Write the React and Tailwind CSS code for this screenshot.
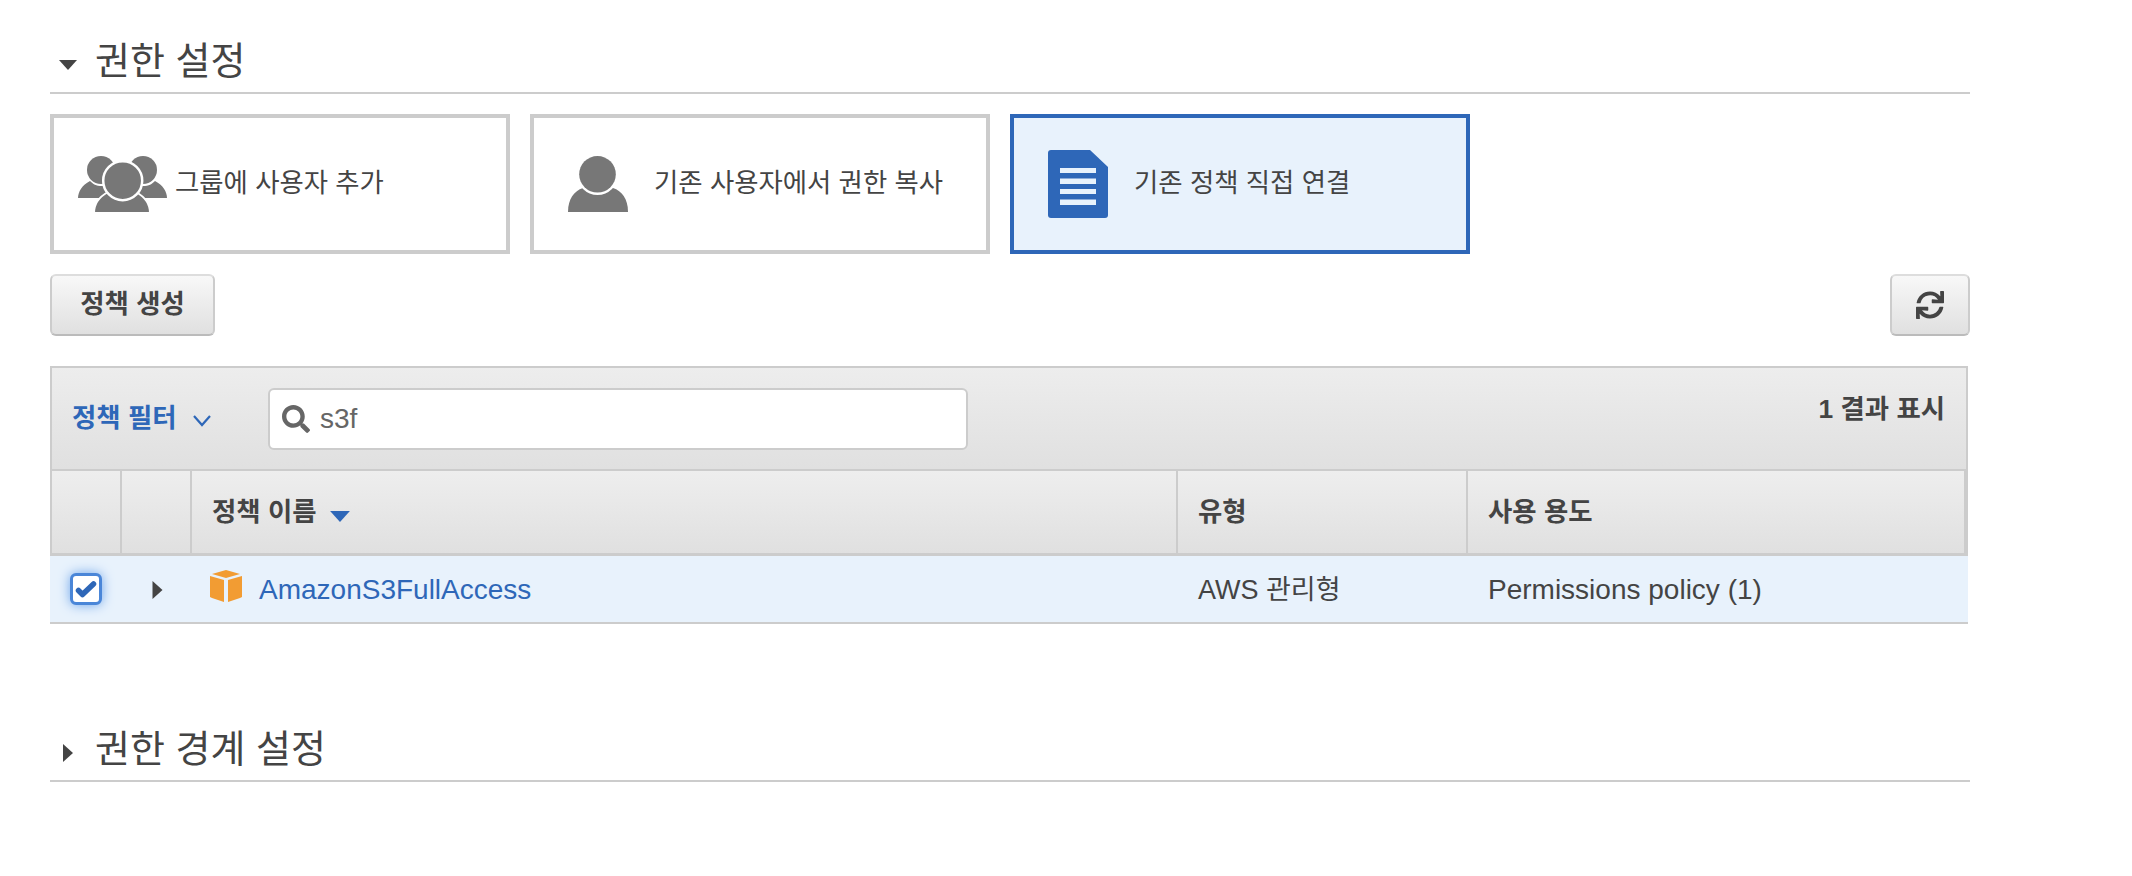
import React from 'react'
import { FaSearch, FaSync } from 'react-icons/fa'

const KR = { fontFamily: '"Liberation Sans", "Noto Sans CJK KR", sans-serif' }

const CaretDown = ({ className }) => (
  <svg viewBox="0 0 18 10" className={className}><path d="M0 0h18L9 10z" fill="currentColor" /></svg>
)
const CaretRight = ({ className }) => (
  <svg viewBox="0 0 10 18" className={className}><path d="M0 0v18l10-9z" fill="currentColor" /></svg>
)

const GroupIcon = () => (
  <svg viewBox="0 0 89 57" className="w-[89px] h-[57px] shrink-0" fill="#777">
    <circle cx="23" cy="14" r="14" />
    <circle cx="65" cy="14" r="14" />
    <path d="M0 42c0-6 4-13 12-17 3 3 6 5 12 5h10v12z" />
    <path d="M89 42c0-6-4-13-12-17-3 3-6 5-12 5H55v12z" />
    <path d="M16 57c0-10 5-16 14-21h28c9 5 14 11 14 21z" stroke="#fff" strokeWidth="2" />
    <circle cx="44.7" cy="24.7" r="19.500" stroke="#fff" strokeWidth="2.500" />
  </svg>
)

const UserIcon = () => (
  <svg viewBox="0 0 60 56" className="w-[60px] h-[56px] shrink-0" fill="#777">
    <path d="M0 56c0-13 6-21 15-24h30c9 3 15 11 15 24z" />
    <circle cx="29.500" cy="18.500" r="20.500" fill="#fff" />
    <circle cx="29.500" cy="18.300" r="18.300" />
  </svg>
)

const DocIcon = () => (
  <svg viewBox="0 0 60 68" className="w-[60px] h-[68px] shrink-0">
    <path d="M3 0h39l18 17v48a3 3 0 0 1-3 3H3a3 3 0 0 1-3-3V3a3 3 0 0 1 3-3z" fill="#2e67b8" />
    <path d="M12 18h36v5H12zM12 28.500h36v5.500H12zM12 39h36v5H12zM12 49.500h36v5.500H12z" fill="#e8f2fc" />
  </svg>
)

const CubeIcon = () => (
  <svg viewBox="0 0 32 32" className="w-[32px] h-[32px]" fill="#f29c33">
    <path d="M16 0l14 4-14 4L2 4z" />
    <path d="M0 6l14 4v22L2 28l-2-1z" />
    <path d="M32 6l-14 4v22l12-4 2-1z" />
  </svg>
)

const Card = ({ icon, label, active, pad }) => (
  <div className={`w-[460px] h-[140px] border-4 flex items-center ${pad} ${active ? 'border-[#2e67b8] bg-[#e8f2fc]' : 'border-[#ccc] bg-white'}`}>
    {icon}
    <span className="text-[26.4px] text-[#444]">{label}</span>
  </div>
)

const Section = ({ caret, title }) => (
  <div className="flex items-center h-[60px] border-b-2 border-[#ccc] pb-1">
    {caret}
    <h2 className="text-[38px] leading-[50px] text-[#444]">{title}</h2>
  </div>
)

const th = 'flex items-center pt-[2px] bg-gradient-to-b from-[#eee] to-[#e0e0e0] border-r-2 border-[#ccc] pl-[20px] text-[26.4px] font-bold text-[#444]'
const btn = 'h-[62px] rounded-[6px] border-2 border-t-[#ddd] border-x-[#ccc] border-b-[#bbb] bg-gradient-to-b from-[#f8f8f8] to-[#e0e0e0] text-[#444]'

const App = () => {
  return (
    <div style={KR} className="w-[2132px] h-[876px] bg-white pl-[50px] pt-[34px]">
      <div className="w-[1920px]">
        <Section title="권한 설정" caret={<CaretDown className="w-[18px] h-[10px] ml-[9px] mr-[18px] mt-2 text-[#444]" />} />

        <div className="flex gap-5 mt-5">
          <Card icon={<GroupIcon />} label="그룹에 사용자 추가" pad="pl-6 gap-[8px]" />
          <Card icon={<UserIcon />} label="기존 사용자에서 권한 복사" pad="pl-[34px] gap-[26px]" />
          <Card active icon={<DocIcon />} label="기존 정책 직접 연결" pad="pl-[34px] gap-[26px]" />
        </div>

        <div className="flex justify-between mt-5">
          <button className={`${btn} w-[165px] text-[26.4px] font-bold`}>정책 생성</button>
          <button className={`${btn} w-[80px] flex items-center justify-center`}>
            <FaSync className="w-[28px] h-[28px]" />
          </button>
        </div>

        <div className="mt-[30px] w-[1918px]">
          <div className="h-[105px] border-2 border-[#ccc] bg-gradient-to-b from-[#ededed] to-[#e0e0e0] flex items-start">
            <div className="flex items-center h-[76px] mt-[13px] pl-[20px] w-[216px] text-[#2e67b8] text-[26.4px] font-bold">
              <span>정책 필터</span>
              <svg viewBox="0 0 18 12" className="w-[18px] h-[12px] ml-[17px] mt-1" fill="none" stroke="currentColor" strokeWidth="2.2"><path d="M1 1l8 9 8-9" /></svg>
            </div>
            <div className="w-[700px] h-[62px] mt-[20px] bg-white border-2 border-[#ccc] rounded-[6px] flex items-center pl-[12px] gap-[10px]">
              <FaSearch className="w-[28px] h-[28px] text-[#666]" />
              <span className="text-[28px] text-[#666]">s3f</span>
            </div>
            <span className="ml-auto mr-[21px] mt-[22px] text-[26.4px] font-bold text-[#444]">1 결과 표시</span>
          </div>

          <div className="grid grid-cols-[70px_70px_986px_290px_1fr] h-[85px] border-x-2 border-b-[3px] border-[#ccc]">
            <div className={th}></div>
            <div className={th}></div>
            <div className={th}>
              <span>정책 이름</span>
              <CaretDown className="w-[20px] h-[11px] ml-[14px] mt-[6px] text-[#2e67b8]" />
            </div>
            <div className={th}>유형</div>
            <div className={`${th} border-r-0`}>사용 용도</div>
          </div>

          <div className="grid grid-cols-[72px_70px_986px_290px_1fr] h-[68px] items-center bg-[#e8f2fc] border-b-2 border-[#ccc] text-[28px] text-[#444]">
            <div className="flex justify-center">
              <div className="w-[32px] h-[32px] rounded-[6px] bg-white border-[3px] border-[#4a86d8] shadow-[0_0_12px_#6fa5ea] flex items-center justify-center">
                <svg viewBox="0 0 22 18" className="w-[22px] h-[18px]" fill="none" stroke="#2e67b8" strokeWidth="5.500" strokeLinecap="round" strokeLinejoin="round"><path d="M3.500 10.500l4 4L18.500 4" /></svg>
              </div>
            </div>
            <div className="flex justify-center pt-[2px]"><CaretRight className="w-[11px] h-[18px] text-[#444]" /></div>
            <div className="flex items-center pl-[18px] gap-[17px] text-[#2e67b8]">
              <span className="-mt-[6px]"><CubeIcon /></span>
              <span className="mt-[2px]">AmazonS3FullAccess</span>
            </div>
            <div className="pl-[20px] pt-[2px] text-[27px]">AWS 관리형</div>
            <div className="pl-[20px] pt-[2px]">Permissions policy (1)</div>
          </div>
        </div>

        <div className="mt-[98px]">
          <Section title="권한 경계 설정" caret={<CaretRight className="w-[10px] h-[18px] ml-[13px] mr-[22px] mt-2 text-[#444]" />} />
        </div>
      </div>
    </div>
  )
}

export default App
